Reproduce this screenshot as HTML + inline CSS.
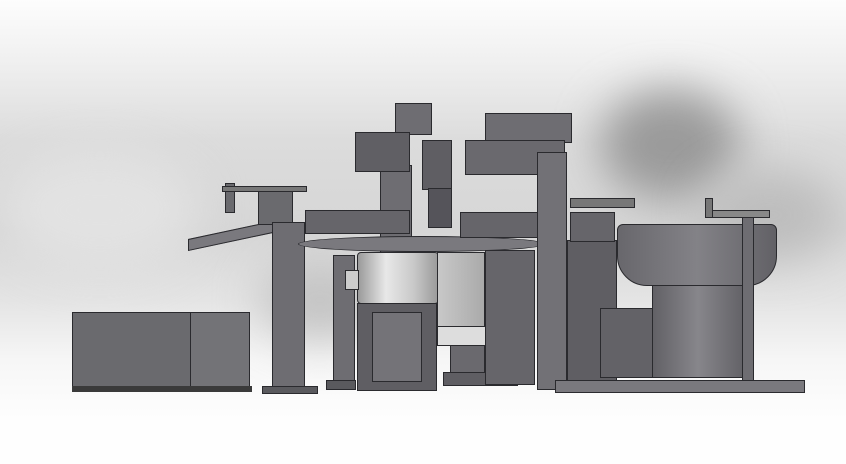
<!DOCTYPE html>
<html><head><style>
body{margin:0;width:846px;height:464px;overflow:hidden;position:relative;
background:linear-gradient(180deg,#fdfdfd 0px,#f0f0f0 60px,#dcdcdc 140px,#d6d6d6 230px,#e4e4e4 300px,#f6f6f6 360px,#fefefe 420px);}
div{position:absolute;box-sizing:border-box}
.b{filter:blur(22px)}
.g{border:1px solid #2a2a2e}
</style></head><body>
<div class="b" style="left:600px;top:90px;width:140px;height:110px;background:#9a9a9a;border-radius:50%"></div>
<div class="b" style="left:700px;top:170px;width:140px;height:90px;background:#bdbdbd;border-radius:50%"></div>
<div class="b" style="left:0;top:150px;width:200px;height:120px;background:#e2e2e2;border-radius:50%"></div>
<div class="b" style="left:260px;top:260px;width:120px;height:80px;background:#c4c4c4;border-radius:50%"></div>

<!-- left box -->
<div class="g" style="left:72px;top:312px;width:178px;height:78px;background:#6a6a6e"></div>
<div class="g" style="left:190px;top:312px;width:60px;height:78px;background:#737377"></div>
<div style="left:72px;top:386px;width:180px;height:6px;background:#3a3a3a"></div>
<!-- chute -->
<div class="g" style="left:188px;top:230px;width:85px;height:12px;background:#7a797e;transform:skewY(-12deg)"></div>
<div class="g" style="left:225px;top:183px;width:10px;height:30px;background:#6a6a6e"></div>
<div class="g" style="left:258px;top:190px;width:35px;height:35px;background:#6a6a6e"></div>
<div class="g" style="left:222px;top:186px;width:85px;height:6px;background:#777"></div>
<!-- pillar -->
<div class="g" style="left:272px;top:222px;width:33px;height:168px;background:#6e6d72"></div>
<div class="g" style="left:262px;top:386px;width:56px;height:8px;background:#5a5a5e"></div>
<!-- center column behind -->
<div class="g" style="left:380px;top:165px;width:32px;height:225px;background:#6e6d72"></div>
<div class="g" style="left:395px;top:103px;width:37px;height:32px;background:#6e6d72"></div>
<div class="g" style="left:355px;top:132px;width:55px;height:40px;background:#605f64"></div>
<div class="g" style="left:422px;top:140px;width:30px;height:50px;background:#5f5e63"></div>
<div class="g" style="left:428px;top:188px;width:24px;height:40px;background:#55545a"></div>
<!-- left arms -->
<div class="g" style="left:305px;top:210px;width:105px;height:24px;background:#66656a"></div>
<!-- table -->
<div class="g" style="left:298px;top:236px;width:248px;height:16px;background:#7a797e;border-radius:50%"></div>
<div class="g" style="left:460px;top:212px;width:80px;height:26px;background:#66656a"></div>
<!-- left post -->
<div class="g" style="left:333px;top:255px;width:22px;height:135px;background:#6e6d72"></div>
<div class="g" style="left:326px;top:380px;width:30px;height:10px;background:#5a5a5e"></div>
<!-- frame -->
<div class="g" style="left:357px;top:303px;width:80px;height:88px;background:#5f5e63"></div>
<div class="g" style="left:372px;top:312px;width:50px;height:70px;background:#747378"></div>
<!-- drum -->
<div class="g" style="left:357px;top:252px;width:82px;height:52px;background:linear-gradient(90deg,#9a9a9a,#e8e8e8 35%,#c8c8c8 70%,#9a9a9a);border-radius:4px"></div>
<div class="g" style="left:345px;top:270px;width:14px;height:20px;background:#ccc"></div>
<div class="g" style="left:437px;top:252px;width:48px;height:78px;background:linear-gradient(90deg,#c8c8c8,#aaa)"></div>
<div class="g" style="left:437px;top:326px;width:50px;height:20px;background:#ddd"></div>
<div class="g" style="left:450px;top:345px;width:35px;height:30px;background:#6a696e"></div>
<div class="g" style="left:443px;top:372px;width:75px;height:14px;background:#5f5e63"></div>
<div class="g" style="left:485px;top:250px;width:50px;height:135px;background:#66656a"></div>
<!-- right upper -->
<div class="g" style="left:485px;top:113px;width:87px;height:30px;background:#6e6d72"></div>
<div class="g" style="left:465px;top:140px;width:100px;height:35px;background:#6a696e"></div>
<!-- tall post -->
<div class="g" style="left:537px;top:152px;width:30px;height:238px;background:#727176"></div>
<div class="g" style="left:567px;top:240px;width:50px;height:142px;background:#5f5e63"></div>
<div class="g" style="left:570px;top:198px;width:65px;height:10px;background:#777"></div>
<div class="g" style="left:570px;top:212px;width:45px;height:30px;background:#66656a"></div>
<div class="g" style="left:600px;top:308px;width:55px;height:70px;background:#636267"></div>
<!-- bowl -->
<div class="g" style="left:652px;top:280px;width:92px;height:98px;background:linear-gradient(90deg,#626166,#87868b 50%,#636267)"></div>
<div class="g" style="left:617px;top:224px;width:160px;height:62px;background:linear-gradient(90deg,#68676c,#838287 50%,#626166);border-radius:6px 6px 30px 30px"></div>
<div class="g" style="left:742px;top:212px;width:12px;height:170px;background:#6e6d72"></div>
<div class="g" style="left:705px;top:210px;width:65px;height:8px;background:#888"></div>
<div class="g" style="left:705px;top:198px;width:8px;height:20px;background:#777"></div>
<div class="g" style="left:555px;top:380px;width:250px;height:13px;background:#7a797e"></div>
</body></html>
